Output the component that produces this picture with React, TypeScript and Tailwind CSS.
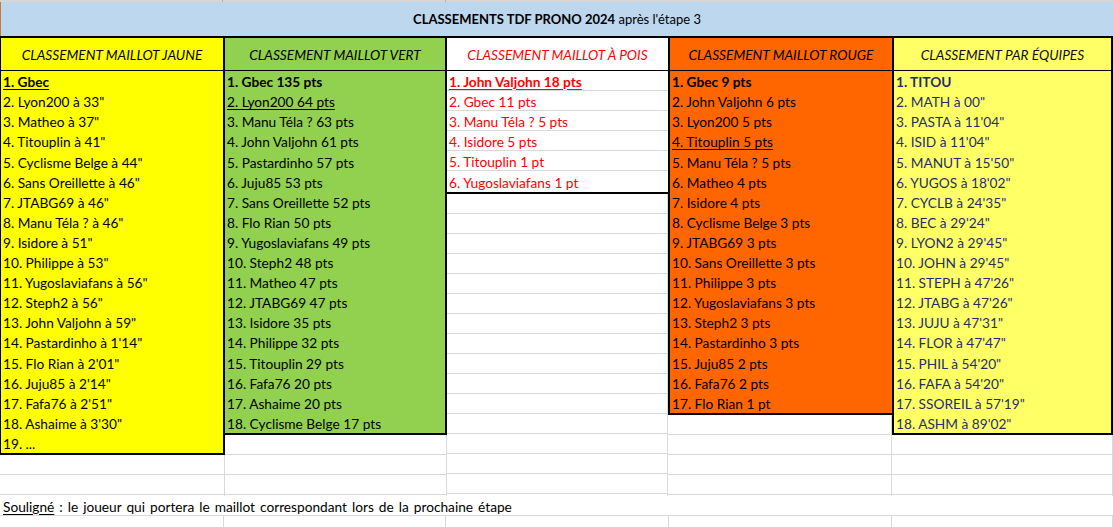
import React from "react";

type Item = { t: string; b?: boolean; u?: boolean };
type Col = {
  title: string;
  bg: string;
  text: string;
  head: string;
  w: string;
  border: string;
  items: Item[];
};

const mk = (arr: string[], bold: number[] = [], und: number[] = []): Item[] =>
  arr.map((t, i) => ({ t: `${i + 1}. ${t}`, b: bold.includes(i), u: und.includes(i) }));

const cols: Col[] = [
  {
    title: "CLASSEMENT MAILLOT JAUNE",
    bg: "bg-[#ffff00]",
    text: "text-black",
    head: "text-black",
    w: "w-[225px]",
    border: "border-l border-r-2 border-black",
    items: mk(
      [
        "Gbec",
        'Lyon200 à 33"',
        'Matheo à 37"',
        'Titouplin à 41"',
        'Cyclisme Belge à 44"',
        'Sans Oreillette à 46"',
        'JTABG69 à 46"',
        'Manu Téla ? à 46"',
        'Isidore à 51"',
        'Philippe à 53"',
        'Yugoslaviafans à 56"',
        'Steph2 à 56"',
        'John Valjohn à 59"',
        "Pastardinho à 1'14\"",
        "Flo Rian à 2'01\"",
        "Juju85 à 2'14\"",
        "Fafa76 à 2'51\"",
        "Ashaime à 3'30\"",
        "...",
      ],
      [0],
      [0]
    ),
  },
  {
    title: "CLASSEMENT MAILLOT VERT",
    bg: "bg-[#92d050]",
    text: "text-black",
    head: "text-black",
    w: "w-[222px]",
    border: "border-r-2 border-black",
    items: mk(
      [
        "Gbec 135 pts",
        "Lyon200 64 pts",
        "Manu Téla ? 63 pts",
        "John Valjohn 61 pts",
        "Pastardinho 57 pts",
        "Juju85 53 pts",
        "Sans Oreillette 52 pts",
        "Flo Rian 50 pts",
        "Yugoslaviafans 49 pts",
        "Steph2 48 pts",
        "Matheo 47 pts",
        "JTABG69 47 pts",
        "Isidore 35 pts",
        "Philippe 32 pts",
        "Titouplin 29 pts",
        "Fafa76 20 pts",
        "Ashaime 20 pts",
        "Cyclisme Belge 17 pts",
      ],
      [0],
      [1]
    ),
  },
  {
    title: "CLASSEMENT MAILLOT À POIS",
    bg: "bg-white",
    text: "text-[#ff0000]",
    head: "text-[#ff0000]",
    w: "w-[221px]",
    border: "",
    items: mk(
      [
        "John Valjohn 18 pts",
        "Gbec 11 pts",
        "Manu Téla ? 5 pts",
        "Isidore 5 pts",
        "Titouplin 1 pt",
        "Yugoslaviafans 1 pt",
      ],
      [0],
      [0]
    ),
  },
  {
    title: "CLASSEMENT MAILLOT ROUGE",
    bg: "bg-[#ff6600]",
    text: "text-black",
    head: "text-black",
    w: "w-[224px]",
    border: "border-l-2 border-black",
    items: mk(
      [
        "Gbec 9 pts",
        "John Valjohn 6 pts",
        "Lyon200 5 pts",
        "Titouplin 5 pts",
        "Manu Téla ? 5 pts",
        "Matheo 4 pts",
        "Isidore 4 pts",
        "Cyclisme Belge 3 pts",
        "JTABG69 3 pts",
        "Sans Oreillette 3 pts",
        "Philippe 3 pts",
        "Yugoslaviafans 3 pts",
        "Steph2 3 pts",
        "Pastardinho 3 pts",
        "Juju85 2 pts",
        "Fafa76 2 pts",
        "Flo Rian 1 pt",
      ],
      [0],
      [3]
    ),
  },
  {
    title: "CLASSEMENT PAR ÉQUIPES",
    bg: "bg-[#ffff66]",
    text: "text-[#1f2f6b]",
    head: "text-[#101020]",
    w: "w-[221px]",
    border: "border-l-2 border-r-2 border-black",
    items: mk(
      [
        "TITOU",
        'MATH à 00"',
        "PASTA à 11'04\"",
        "ISID à 11'04\"",
        "MANUT à 15'50\"",
        "YUGOS à 18'02\"",
        "CYCLB à 24'35\"",
        "BEC à 29'24\"",
        "LYON2 à 29'45\"",
        "JOHN à 29'45\"",
        "STEPH à 47'26\"",
        "JTABG à 47'26\"",
        "JUJU à 47'31\"",
        "FLOR à 47'47\"",
        "PHIL à 54'20\"",
        "FAFA à 54'20\"",
        "SSOREIL à 57'19\"",
        "ASHM à 89'02\"",
      ],
      [0],
      []
    ),
  },
];

function Column({ c }: { c: Col }) {
  const emptyRows = Array.from({ length: 22 });
  const white = c.bg === "bg-white";
  return (
    <div className={`${c.w} shrink-0 flex flex-col overflow-hidden`}>
      <div className={`${c.bg} ${c.border} border-b-2 border-b-black flex flex-col`}>
        <div
          className={`h-[33px] shrink-0 border-b border-black flex items-center justify-center pt-[1px] italic ${c.head} whitespace-nowrap`}
        >
          {c.title}
        </div>
        {c.items.map((it, i) => (
          <div
            key={i}
            className={`h-[20.1px] shrink-0 flex items-center pt-[2px] pl-[2px] whitespace-nowrap ${c.text} ${
              it.b ? "font-bold" : ""
            } ${white && i < c.items.length - 1 ? "border-b border-[#d9d9d9]" : ""}`}
          >
            <span className={it.u ? "underline underline-offset-[2px] decoration-[1px]" : ""}>{it.t}</span>
          </div>
        ))}
      </div>
      {emptyRows.map((_, i) => (
        <div key={i} className="h-[20px] shrink-0 border-b border-r border-[#d9d9d9] bg-white" />
      ))}
    </div>
  );
}

export default function App() {
  return (
    <div
      className="w-[1113px] h-[527px] overflow-hidden bg-white text-[13.7px] leading-none text-black"
      style={{ fontFamily: "Lato, 'Open Sans', sans-serif" }}
    >
      <div className="h-[2px] bg-[#d6d6d6] flex">
        <div className="w-[223px] border-r border-[#b0b0b0]" />
        <div className="w-[223px] border-r border-[#b0b0b0]" />
      </div>
      <div className="h-[34px] bg-[#bdd7ee] border-l border-l-[#c87a3a] flex items-center justify-center text-[13px]">
        <span>
          <span className="font-bold">CLASSEMENTS TDF PRONO 2024</span> après l'étape 3
        </span>
      </div>
      <div className="h-[2px] bg-black" />
      <div className="h-[458px] flex overflow-hidden">
        {cols.map((c, i) => (
          <Column key={i} c={c} />
        ))}
      </div>
      <div className="h-[20px] border-b border-[#d9d9d9] flex items-center pt-[2px] pl-[3px] whitespace-nowrap [word-spacing:1.5px]">
        <span className="underline underline-offset-[2px] decoration-[1px]">Souligné</span>
        <span>&nbsp;: le joueur qui portera le maillot correspondant lors de la prochaine étape</span>
      </div>
      <div className="h-[20px] flex">
        <div className="w-[224px] border-r border-[#d9d9d9]" />
        <div className="w-[222px] border-r border-[#d9d9d9]" />
        <div className="w-[223px] border-r border-[#d9d9d9]" />
        <div className="w-[223px] border-r border-[#d9d9d9]" />
        <div className="w-[221px] border-r border-[#d9d9d9]" />
      </div>
    </div>
  );
}
